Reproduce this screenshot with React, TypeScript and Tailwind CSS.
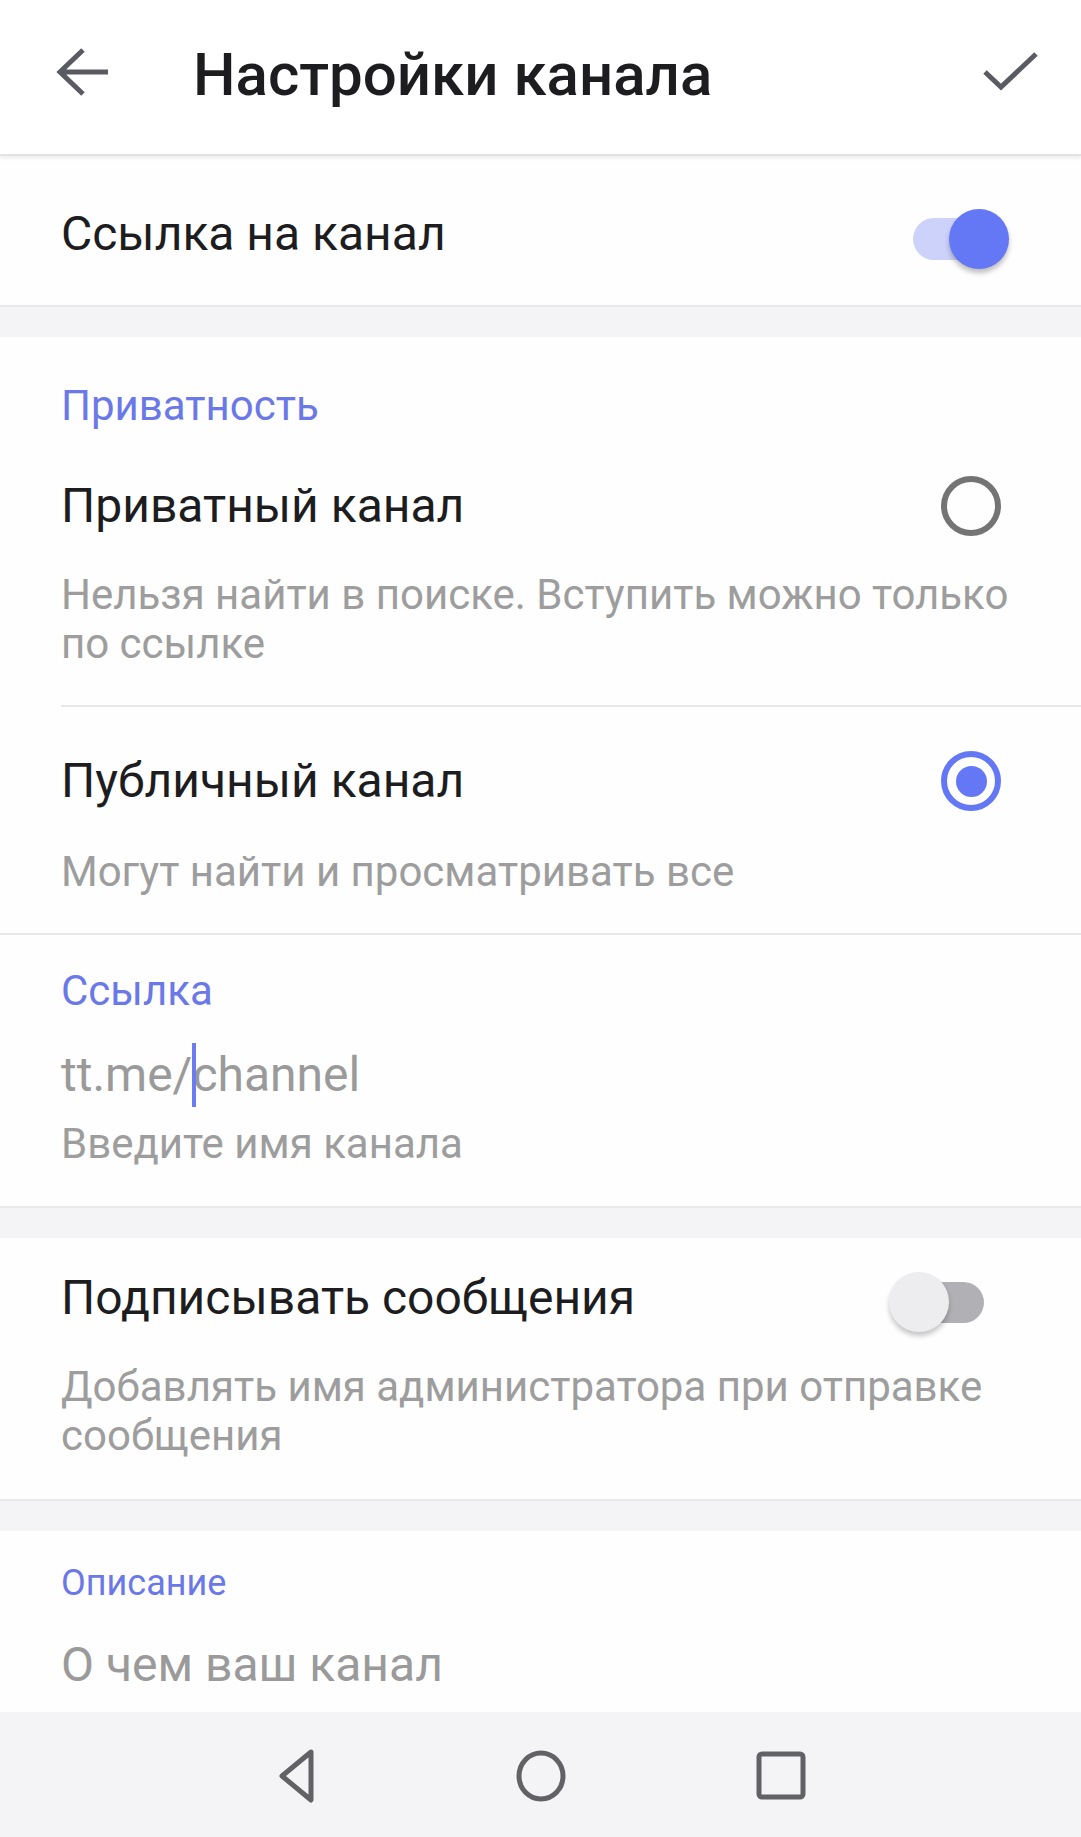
import React from "react";

const ToggleOn = () => (
  <div className="relative w-[96px] h-[60px] shrink-0">
    <div className="absolute left-0 top-[9px] w-[78px] h-[42px] rounded-full bg-[#cdd2fb]" />
    <div className="absolute right-0 top-0 w-[60px] h-[60px] rounded-full bg-[#6478f5] shadow-[0_4px_5px_rgba(0,0,0,0.25)]" />
  </div>
);

const ToggleOff = () => (
  <div className="relative w-[96px] h-[60px] shrink-0">
    <div className="absolute left-[15px] top-[10px] w-[80px] h-[41px] rounded-full bg-[#b1b0b4]" />
    <div className="absolute left-0 top-0 w-[60px] h-[60px] rounded-full bg-[#ededf0] shadow-[0_4px_5px_rgba(0,0,0,0.22)]" />
  </div>
);

const Radio = ({ checked }: { checked?: boolean }) =>
  checked ? (
    <div className="w-[60px] h-[60px] rounded-full border-[6px] border-[#6478f5] flex items-center justify-center shrink-0">
      <div className="w-[31px] h-[31px] rounded-full bg-[#6478f5]" />
    </div>
  ) : (
    <div className="w-[60px] h-[60px] rounded-full border-[6px] border-[#747474] shrink-0" />
  );

const Gap = () => <div className="h-[32px] bg-[#f4f4f6] border-t-2 border-[#e9e9ec]" />;

export default function App() {
  return (
    <div className="w-[1081px] h-[1837px] flex flex-col bg-[#f4f4f6] font-['Roboto',sans-serif] overflow-hidden">
      {/* toolbar */}
      <div className="relative z-10 h-[156px] bg-white flex items-center pb-[4px] shadow-[0_2px_4px_rgba(0,0,0,0.08)] border-b-2 border-[#e3e3e6]">
        <svg width="56" height="56" viewBox="0 0 56 56" className="ml-[56px] shrink-0">
          <path d="M52 25H6M27 3L4 25L27 47" fill="none" stroke="#5a5a62" strokeWidth="5" />
        </svg>
        <h1 className="ml-[81px] text-[60px] leading-none font-medium text-[#1d1d1f]">
          Настройки канала
        </h1>
        <svg width="56" height="56" viewBox="0 0 56 56" className="ml-auto mr-[43px] shrink-0">
          <path d="M3 25L19 40L54 7" fill="none" stroke="#5a5a62" strokeWidth="5" />
        </svg>
      </div>

      {/* link toggle */}
      <div className="h-[149px] bg-[#fefefe] flex items-center pt-[6px] pl-[61px] pr-[72px]">
        <span className="text-[48px] text-[#1d1d1f]">Ссылка на канал</span>
        <div className="ml-auto mt-[10px]">
          <ToggleOn />
        </div>
      </div>
      <Gap />

      {/* privacy */}
      <div className="bg-[#fefefe]">
        <div className="pt-[45px] pl-[61px] text-[42px] leading-[48px] text-[#6a78e8]">Приватность</div>

        <div className="ml-[61px] border-b-2 border-[#e8e8eb] pb-[37px]">
          <div className="mt-[42px] h-[68px] flex items-center pr-[80px]">
            <span className="text-[48px] text-[#1d1d1f]">Приватный канал</span>
            <div className="ml-auto">
              <Radio />
            </div>
          </div>
          <p className="mt-[30px] max-w-[960px] text-[42px] leading-[49px] text-[#9d9d9d]">
            Нельзя найти в поиске. Вступить можно только по ссылке
          </p>
        </div>

        <div className="pl-[61px] border-b-2 border-[#e8e8eb] pb-[37px]">
          <div className="mt-[40px] h-[68px] flex items-center pr-[80px]">
            <span className="text-[48px] text-[#1d1d1f]">Публичный канал</span>
            <div className="ml-auto">
              <Radio checked />
            </div>
          </div>
          <p className="mt-[32px] text-[42px] leading-[49px] text-[#9d9d9d]">Могут найти и просматривать все</p>
        </div>

        <div className="pl-[61px] pb-[38px]">
          <div className="pt-[32px] text-[42px] leading-[48px] text-[#6a78e8]">Ссылка</div>
          <div className="mt-[28px] h-[64px] flex items-center text-[48px] text-[#9a9a9a]">
            <span>tt.me/</span>
            <span className="w-[4px] h-[64px] bg-[#6b7bf0] -mr-[4px] relative z-10" />
            <span>channel</span>
          </div>
          <p className="mt-[12px] text-[42px] leading-[49px] text-[#9d9d9d]">Введите имя канала</p>
        </div>
      </div>
      <Gap />

      {/* sign messages */}
      <div className="bg-[#fefefe] pl-[61px] pb-[39px]">
        <div className="mt-[26px] h-[68px] flex items-center pr-[96px]">
          <span className="text-[48px] text-[#1d1d1f]">Подписывать сообщения</span>
          <div className="ml-auto mt-[8px]">
            <ToggleOff />
          </div>
        </div>
        <p className="mt-[30px] max-w-[960px] text-[42px] leading-[49px] text-[#9d9d9d]">
          Добавлять имя администратора при отправке сообщения
        </p>
      </div>
      <Gap />

      {/* description */}
      <div className="bg-[#fefefe] pl-[61px] pb-[15px]">
        <div className="pt-[28px] text-[36px] leading-[48px] text-[#6a78e8]">Описание</div>
        <div className="mt-[26px] h-[64px] flex items-center text-[48px] text-[#9a9a9a]">О чем ваш канал</div>
      </div>

      {/* system nav */}
      <div className="flex-1 bg-[#f4f3f6] flex items-center justify-center gap-[180px] pt-[2px]">
        <svg width="60" height="60" viewBox="0 0 60 60">
          <path d="M40 6L11 30L40 54Z" fill="none" stroke="#626266" strokeWidth="5" strokeLinejoin="round" />
        </svg>
        <svg width="60" height="60" viewBox="0 0 60 60">
          <ellipse cx="30" cy="30" rx="22" ry="23" fill="none" stroke="#626266" strokeWidth="5" />
        </svg>
        <svg width="60" height="60" viewBox="0 0 60 60">
          <rect x="8" y="8" width="44" height="43" rx="3" fill="none" stroke="#626266" strokeWidth="5" />
        </svg>
      </div>
    </div>
  );
}
